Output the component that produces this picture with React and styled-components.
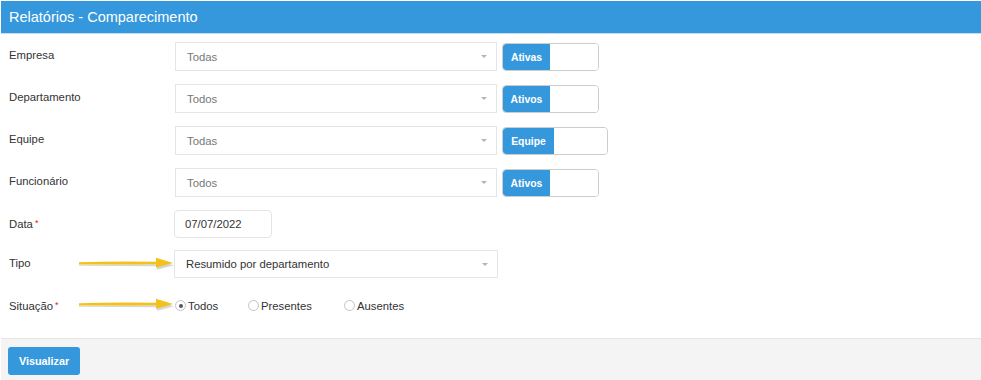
import React from 'react';
import styled, {createGlobalStyle} from 'styled-components';

const GlobalStyle = createGlobalStyle`
    html, body {
        margin: 0;
        padding: 0;
        background: #ffffff;
    }
    body {
        font-family: "Liberation Sans", Arial, sans-serif;
        color: #333333;
    }
`;

const Page = styled.div`
    width: 981px;
    height: 380px;
    padding: 1px 0 0 1px;
    box-sizing: border-box;
    display: flex;
    flex-direction: column;
    overflow: hidden;
`;

const Header = styled.div`
    height: 32px;
    background: #3598dc;
    border-bottom: 1px solid #c3def4;
    display: flex;
    align-items: center;
    padding-left: 8px;
    color: #ffffff;
    font-size: 14.5px;
`;

const Body = styled.div`
    flex: 1;
    padding: 8px 0 0 0;
    display: flex;
    flex-direction: column;
`;

const Row = styled.div`
    position: relative;
    display: flex;
    align-items: ${props => props.$center ? 'center' : 'flex-start'};
    margin-top: ${props => props.$mt || 0}px;
`;

const Label = styled.div`
    width: 173px;
    padding-left: 8px;
    padding-top: ${props => props.$center ? 0 : 5}px;
    box-sizing: border-box;
    font-size: 11.3px;
    line-height: 16px;
    color: #333333;
    flex-shrink: 0;
`;

const Required = styled.span`
    color: #e02222;
    font-size: 9px;
    margin-left: 2px;
    vertical-align: 2px;
`;

const Select = styled.div`
    width: ${props => props.$w || 323}px;
    height: ${props => props.$h || 29}px;
    margin-left: ${props => props.$ml || 0}px;
    border: 1px solid #e5e5e5;
    box-sizing: border-box;
    display: flex;
    align-items: center;
    justify-content: space-between;
    padding: 0 9px 0 11px;
    font-size: 11.3px;
    color: ${props => props.$placeholder ? '#777777' : '#333333'};
`;

const Caret = styled.span`
    width: 0;
    height: 0;
    border-left: 3px solid transparent;
    border-right: 3px solid transparent;
    border-top: 3px solid #b4b4b4;
`;

const Toggle = styled.div`
    margin-left: 5px;
    display: flex;
    height: 28px;
    border: 1px solid #cccccc;
    border-radius: 4px;
    box-sizing: border-box;
    overflow: hidden;
    margin-top: 1px;
`;

const ToggleOn = styled.div`
    width: ${props => props.$w}px;
    background: #3598dc;
    color: #ffffff;
    font-weight: bold;
    font-size: 10.4px;
    display: flex;
    align-items: center;
    justify-content: center;
    border-radius: 3px 0 0 3px;
`;

const ToggleOff = styled.div`
    width: ${props => props.$w}px;
    background: #ffffff;
`;

const DateInput = styled.div`
    width: 98px;
    height: 28px;
    border: 1px solid #e5e5e5;
    border-radius: 4px;
    box-sizing: border-box;
    display: flex;
    align-items: center;
    padding-left: 10px;
    font-size: 11.3px;
    color: #333333;
`;

const RadioGroup = styled.div`
    display: flex;
    align-items: center;
    margin-left: 1px;
`;

const RadioOption = styled.label`
    display: flex;
    align-items: center;
    font-size: 11.3px;
    color: #333333;
    width: ${props => props.$w}px;
`;

const RadioCircle = styled.span`
    width: 11px;
    height: 11px;
    border: 1px solid #c4c4c4;
    border-radius: 50%;
    box-sizing: border-box;
    display: flex;
    align-items: center;
    justify-content: center;
    margin-right: 2px;
    background: #ffffff;

    &::after {
        content: '';
        display: ${props => props.$checked ? 'block' : 'none'};
        width: 4px;
        height: 4px;
        border-radius: 50%;
        background: #555555;
    }
`;

const Pointer = styled.svg`
    position: absolute;
    left: 76px;
    top: ${props => props.$top}px;
    pointer-events: none;
`;

const Footer = styled.div`
    margin-top: auto;
    height: 42px;
    background: #f4f4f4;
    border-top: 1px solid #e5e5e5;
    padding: 8px 0 0 7px;
    box-sizing: border-box;
`;

const Button = styled.button`
    width: 72px;
    height: 28px;
    border: none;
    border-radius: 3px;
    background: #3598dc;
    color: #ffffff;
    font-family: "Liberation Sans", Arial, sans-serif;
    font-size: 10.8px;
    font-weight: bold;
    cursor: pointer;
`;

const Arrow = ({top}) => (
    <Pointer $top={top} width="100" height="14" viewBox="0 0 100 14">
        <path d="M2 8.5 L80 9 L80 12.5 L97 8 L80 3.5 L80 7 L2 7.5 Z" fill="#8a8a8a" opacity="0.35" transform="translate(0 1.2)"/>
        <path d="M2 6.3 Q40 5 79 5.8 L79 1.8 L96 7 L79 11.8 L79 8.2 Q40 8.8 2 8.4 Z" fill="#f3c11b"/>
    </Pointer>
);

const filters = [
    {label: 'Empresa', value: 'Todas', toggle: 'Ativas', on: 47, off: 48},
    {label: 'Departamento', value: 'Todos', toggle: 'Ativos', on: 47, off: 48},
    {label: 'Equipe', value: 'Todas', toggle: 'Equipe', on: 51, off: 53},
    {label: 'Funcionário', value: 'Todos', toggle: 'Ativos', on: 47, off: 48},
];

export default function App() {
    return (
        <Page>
            <GlobalStyle/>
            <Header>Relatórios - Comparecimento</Header>
            <Body>
                {filters.map((f, i) => (
                    <Row key={f.label} $mt={i === 0 ? 0 : 13}>
                        <Label>{f.label}</Label>
                        <Select $ml={1} $w={322} $placeholder>
                            <span>{f.value}</span>
                            <Caret/>
                        </Select>
                        <Toggle>
                            <ToggleOn $w={f.on}>{f.toggle}</ToggleOn>
                            <ToggleOff $w={f.off}/>
                        </Toggle>
                    </Row>
                ))}
                <Row $mt={13}>
                    <Label>Data<Required>*</Required></Label>
                    <DateInput>07/07/2022</DateInput>
                </Row>
                <Row $mt={12}>
                    <Label>Tipo</Label>
                    <Select $h={28} $w={324}>
                        <span>Resumido por departamento</span>
                        <Caret/>
                    </Select>
                    <Arrow top={6}/>
                </Row>
                <Row $mt={19} $center>
                    <Label $center>Situação<Required>*</Required></Label>
                    <RadioGroup>
                        <RadioOption $w={73}><RadioCircle $checked/>Todos</RadioOption>
                        <RadioOption $w={96}><RadioCircle/>Presentes</RadioOption>
                        <RadioOption $w={80}><RadioCircle/>Ausentes</RadioOption>
                    </RadioGroup>
                    <Arrow top={0}/>
                </Row>
                <Footer>
                    <Button>Visualizar</Button>
                </Footer>
            </Body>
        </Page>
    );
}
